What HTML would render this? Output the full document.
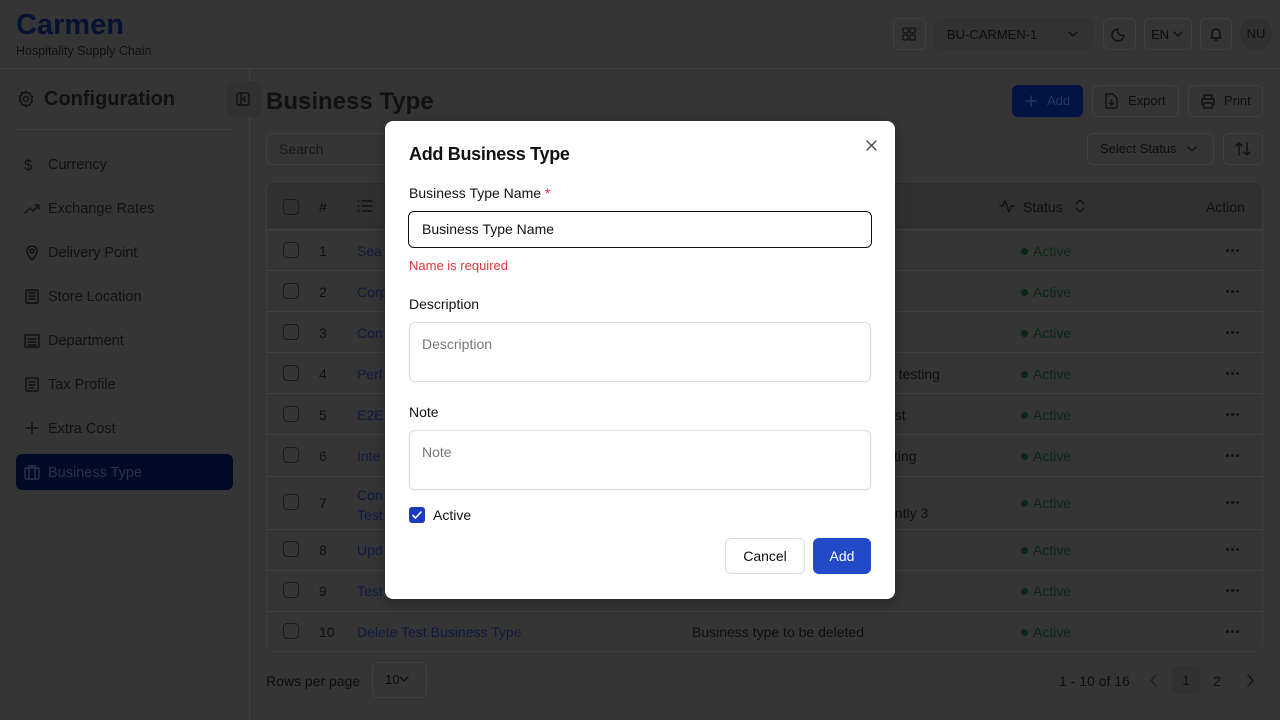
<!DOCTYPE html>
<html><head><meta charset="utf-8"><style>
*{box-sizing:border-box;margin:0;padding:0}
body{width:1280px;height:720px;overflow:hidden;background:#353535;font-family:"Liberation Sans",sans-serif;color:#0e0e0e;position:relative;font-size:14px}
.a{position:absolute}
.bx{position:absolute;border:1px solid #404040;border-radius:6px}
.cb{position:absolute;width:16px;height:16px;border:1px solid #1a1a1a;border-radius:4px;left:283px}
.row{position:absolute;left:266px;width:997px;border-top:1px solid #404040}
.lnk{color:#101a40}
.st{position:absolute;left:1021px;color:#0a2616}
.st:before{content:"";display:inline-block;width:7px;height:7px;border-radius:50%;background:#0a2616;margin-right:5px;vertical-align:1px}
.dots{position:absolute;left:1226px;width:14px;height:4px}
.dots:before{content:"";position:absolute;left:0;top:0;width:3px;height:3px;border-radius:50%;background:#111;box-shadow:5px 0 #111,10px 0 #111}
.nav{position:absolute;left:48px;font-size:14.5px;color:#111}
.ni{position:absolute;left:24px;width:16px;height:16px}
svg{fill:none;stroke:#111;stroke-width:2;stroke-linecap:round;stroke-linejoin:round}
</style></head><body>
<div class="a" style="left:16px;top:9px;font-size:29px;font-weight:bold;color:#061233">Carmen</div>
<div class="a" style="left:16px;top:44px;font-size:12.5px;color:#111">Hospitality Supply Chain</div>
<div class="a" style="left:0;top:68px;width:1280px;border-top:1px solid #404040"></div>
<div class="a" style="left:249px;top:69px;height:651px;border-left:1px solid #404040"></div>
<div class="bx" style="left:893px;top:18px;width:33px;height:32px"></div>
<svg class="a" style="left:902px;top:27px;stroke-width:1.3" width="14" height="14"><rect x="1" y="1" width="5" height="5" rx="1"/><rect x="8" y="1" width="5" height="5" rx="1"/><rect x="1" y="8" width="5" height="5" rx="1"/><rect x="8" y="8" width="5" height="5" rx="1"/></svg>
<div class="a" style="left:934px;top:18px;width:159px;height:32px;background:#323232;border-radius:6px"></div>
<div class="a" style="left:947px;top:27px;font-size:13px">BU-CARMEN-1</div>
<svg class="a" style="left:1067px;top:29px;stroke-width:1.4" width="12" height="10"><path d="M2 3l4 4 4-4"/></svg>
<div class="bx" style="left:1103px;top:18px;width:33px;height:32px"></div>
<svg class="a" style="left:1111px;top:26px;stroke-width:1.5" width="16" height="16"><path d="M13 9A6 6 0 1 1 7 3a4.5 4.5 0 0 0 6 6z"/></svg>
<div class="bx" style="left:1144px;top:18px;width:48px;height:32px"></div>
<div class="a" style="left:1151px;top:27px;font-size:13px">EN</div>
<svg class="a" style="left:1172px;top:29px;stroke-width:1.4" width="12" height="10"><path d="M2 3l4 4 4-4"/></svg>
<div class="bx" style="left:1200px;top:18px;width:32px;height:32px"></div>
<svg class="a" style="left:1208px;top:26px;stroke-width:1.5" width="16" height="16"><path d="M4 11V7a4 4 0 0 1 8 0v4l1 1H3zM7 14h2"/></svg>
<div class="a" style="left:1240px;top:18px;width:32px;height:32px;border-radius:50%;background:#303030;font-size:13px;text-align:center;line-height:32px">NU</div>

<svg class="a" style="left:17px;top:90px;stroke-width:1.6" width="18" height="18"><circle cx="9" cy="9" r="2.5"/><path d="M9 1.5l1.5 2 2.5-.5.5 2.5 2 1.5-1 2.3 1 2.2-2 1.5-.5 2.5-2.5-.5L9 16.5l-1.5-2-2.5.5-.5-2.5-2-1.5 1-2.2-1-2.3 2-1.5.5-2.5 2.5.5z"/></svg>
<div class="a" style="left:44px;top:88px;font-size:20px;font-weight:bold;color:#111">Configuration</div>
<div class="a" style="left:16px;top:129px;width:217px;border-top:1px solid #404040"></div>
<div class="a" style="left:227px;top:81px;width:34px;height:36px;background:#313131;border-radius:6px"></div>
<svg class="a" style="left:236px;top:92px;stroke-width:1.4" width="14" height="14"><rect x="1" y="1" width="12" height="12" rx="2"/><path d="M5 1v12M9 5l-2 2 2 2"/></svg>
<div class="ni" style="top:157px;font-size:15px">$</div><div class="nav" style="top:157px">Currency</div>
<svg class="a" style="left:24px;top:202px;stroke-width:1.5" width="16" height="14"><path d="M1 11l5-5 3 3 6-6M11 3h4v4"/></svg><div class="nav" style="top:201px">Exchange Rates</div>
<svg class="a" style="left:25px;top:244px;stroke-width:1.5" width="14" height="17"><path d="M7 16s5-5 5-9a5 5 0 0 0-10 0c0 4 5 9 5 9z"/><circle cx="7" cy="7" r="2"/></svg><div class="nav" style="top:245px">Delivery Point</div>
<svg class="a" style="left:25px;top:289px;stroke-width:1.5" width="14" height="15"><rect x="1" y="1" width="12" height="13" rx="1"/><path d="M4 4h6M4 7h6M4 10h6"/></svg><div class="nav" style="top:289px">Store Location</div>
<svg class="a" style="left:24px;top:333px;stroke-width:1.5" width="16" height="15"><rect x="1" y="2" width="14" height="12" rx="1"/><path d="M4 6h8M4 9h8M4 12h8"/></svg><div class="nav" style="top:333px">Department</div>
<svg class="a" style="left:25px;top:377px;stroke-width:1.5" width="14" height="15"><rect x="1" y="1" width="12" height="13" rx="1"/><path d="M4 5h6M4 8h6M4 11h4"/></svg><div class="nav" style="top:377px">Tax Profile</div>
<svg class="a" style="left:25px;top:421px;stroke-width:1.5" width="14" height="14"><path d="M7 1v12M1 7h12"/></svg><div class="nav" style="top:421px">Extra Cost</div>
<div class="a" style="left:16px;top:454px;width:217px;height:36px;background:#010b26;border-radius:6px"></div>
<svg class="a" style="left:24px;top:464px;stroke:#2b3146;stroke-width:1.5" width="16" height="16"><rect x="1" y="4" width="14" height="11" rx="1"/><path d="M5 4V2h6v2M5 4v11M11 4v11"/></svg><div class="nav" style="top:465px;color:#2b3146">Business Type</div>

<div class="a" style="left:266px;top:88px;font-size:24px;font-weight:bold;color:#111">Business Type</div>
<div class="a" style="left:1012px;top:85px;width:71px;height:32px;background:#021443;border-radius:6px;color:#2a355a;font-size:13px;line-height:32px;padding-left:35px">Add</div>
<svg class="a" style="left:1025px;top:95px;stroke:#2a355a;stroke-width:1.5" width="12" height="12"><path d="M6 1v10M1 6h10"/></svg>
<div class="bx" style="left:1092px;top:85px;width:87px;height:32px;font-size:13px;line-height:30px;padding-left:35px">Export</div>
<svg class="a" style="left:1105px;top:93px;stroke-width:1.4" width="13" height="16"><path d="M1 1h7l4 4v10H1zM6.5 7v5M4.5 10l2 2 2-2"/></svg>
<div class="bx" style="left:1188px;top:85px;width:75px;height:32px;font-size:13px;line-height:30px;padding-left:35px">Print</div>
<svg class="a" style="left:1200px;top:94px;stroke-width:1.4" width="16" height="15"><path d="M4 5V1h8v4M4 11H2V5h12v6h-2M4 9h8v5H4z"/></svg>
<div class="bx" style="left:266px;top:133px;width:200px;height:32px;font-size:14px;line-height:31px;padding-left:12px;color:#151515">Search</div>
<div class="bx" style="left:1087px;top:133px;width:127px;height:32px;font-size:13px;line-height:30px;padding-left:12px">Select Status</div>
<svg class="a" style="left:1186px;top:144px;stroke-width:1.4" width="12" height="10"><path d="M2 3l4 4 4-4"/></svg>
<div class="bx" style="left:1223px;top:133px;width:40px;height:32px"></div>
<svg class="a" style="left:1235px;top:141px;stroke-width:1.4" width="16" height="16"><path d="M4 14V2M1 5l3-3 3 3M12 2v12M9 11l3 3 3-3"/></svg>

<div class="a" style="left:266px;top:181px;width:997px;height:471px;border:1px solid #3d3d3d;border-radius:8px"></div>
<div class="a" style="left:267px;top:182px;width:995px;height:47px;background:#303030;border-radius:8px 8px 0 0"></div>
<div class="cb" style="top:199px"></div>
<div class="a" style="left:319px;top:199px">#</div>
<svg class="a" style="left:357px;top:199px;stroke-width:1.4" width="16" height="14"><path d="M5 2h10M5 7h10M5 12h10M1 2h1M1 7h1M1 12h1"/></svg>
<svg class="a" style="left:999px;top:198px;stroke-width:1.4" width="16" height="16"><path d="M1 8h3l2-6 4 12 2-6h3"/></svg>
<div class="a" style="left:1023px;top:199px">Status</div>
<svg class="a" style="left:1074px;top:199px;stroke-width:1.4" width="12" height="14"><path d="M2 5l4-4 4 4M2 9l4 4 4-4"/></svg>
<div class="a" style="left:1206px;top:199px">Action</div>

<div class="row" style="top:229px"></div><div class="cb" style="top:242px"></div><div class="a" style="left:319px;top:243px">1</div><div class="a lnk" style="left:357px;top:243px">Sea</div><div class="st" style="top:243px">Active</div><div class="dots" style="top:249px"></div>
<div class="row" style="top:270px"></div><div class="cb" style="top:283px"></div><div class="a" style="left:319px;top:284px">2</div><div class="a lnk" style="left:357px;top:284px">Corp</div><div class="st" style="top:284px">Active</div><div class="dots" style="top:290px"></div>
<div class="row" style="top:311px"></div><div class="cb" style="top:324px"></div><div class="a" style="left:319px;top:325px">3</div><div class="a lnk" style="left:357px;top:325px">Con</div><div class="st" style="top:325px">Active</div><div class="dots" style="top:331px"></div>
<div class="row" style="top:352px"></div><div class="cb" style="top:365px"></div><div class="a" style="left:319px;top:366px">4</div><div class="a lnk" style="left:357px;top:366px">Perf</div><div class="a" style="left:887px;top:366px">e testing</div><div class="st" style="top:366px">Active</div><div class="dots" style="top:372px"></div>
<div class="row" style="top:393px"></div><div class="cb" style="top:406px"></div><div class="a" style="left:319px;top:407px">5</div><div class="a lnk" style="left:357px;top:407px">E2E</div><div class="a" style="left:887px;top:407px">est</div><div class="st" style="top:407px">Active</div><div class="dots" style="top:413px"></div>
<div class="row" style="top:434px"></div><div class="cb" style="top:447px"></div><div class="a" style="left:319px;top:448px">6</div><div class="a lnk" style="left:357px;top:448px">Inte</div><div class="a" style="left:887px;top:448px">sting</div><div class="st" style="top:448px">Active</div><div class="dots" style="top:454px"></div>
<div class="row" style="top:476px"></div><div class="cb" style="top:494px"></div><div class="a" style="left:319px;top:495px">7</div><div class="a lnk" style="left:357px;top:485px;line-height:20px">Con<br>Test</div><div class="a" style="left:887px;top:505px">ently 3</div><div class="st" style="top:495px">Active</div><div class="dots" style="top:501px"></div>
<div class="row" style="top:529px"></div><div class="cb" style="top:541px"></div><div class="a" style="left:319px;top:542px">8</div><div class="a lnk" style="left:357px;top:542px">Upd</div><div class="st" style="top:542px">Active</div><div class="dots" style="top:548px"></div>
<div class="row" style="top:570px"></div><div class="cb" style="top:582px"></div><div class="a" style="left:319px;top:583px">9</div><div class="a lnk" style="left:357px;top:583px">Test</div><div class="st" style="top:583px">Active</div><div class="dots" style="top:589px"></div>
<div class="row" style="top:611px"></div><div class="cb" style="top:623px"></div><div class="a" style="left:319px;top:624px">10</div><div class="a lnk" style="left:357px;top:624px">Delete Test Business Type</div><div class="a" style="left:692px;top:624px">Business type to be deleted</div><div class="st" style="top:624px">Active</div><div class="dots" style="top:630px"></div>

<div class="a" style="left:266px;top:673px">Rows per page</div>
<div class="bx" style="left:372px;top:662px;width:55px;height:36px;font-size:13px;line-height:34px;padding-left:12px">10</div>
<svg class="a" style="left:399px;top:675px;stroke-width:1.3" width="10" height="9"><path d="M1 2l4 4 4-4"/></svg>
<div class="a" style="left:1059px;top:673px">1 - 10 of 16</div>
<svg class="a" style="left:1149px;top:674px;stroke:#222;stroke-width:1.5" width="10" height="13"><path d="M7 1L2 6.5 7 12"/></svg>
<div class="a" style="left:1172px;top:666px;width:28px;height:28px;background:#313131;border-radius:6px;text-align:center;line-height:28px">1</div>
<div class="a" style="left:1213px;top:673px">2</div>
<svg class="a" style="left:1245px;top:674px;stroke-width:1.5" width="10" height="13"><path d="M3 1l5 5.5L3 12"/></svg>

<div class="a" style="left:385px;top:121px;width:510px;height:478px;background:#fff;border-radius:8px;box-shadow:0 4px 16px rgba(0,0,0,.25)"></div>
<div class="a" style="left:409px;top:144px;font-size:18px;font-weight:bold;color:#111;letter-spacing:-.3px">Add Business Type</div>
<svg class="a" style="left:866px;top:140px;stroke-width:1.3;stroke:#444" width="11" height="11"><path d="M1 1l9 9M10 1L1 10"/></svg>
<div class="a" style="left:409px;top:185px;color:#111">Business Type Name <span style="color:#e23">*</span></div>
<div class="a" style="left:408px;top:211px;width:464px;height:37px;border:1.5px solid #111;border-radius:6px;padding-left:13px;line-height:35px;color:#111">Business Type Name</div>
<div class="a" style="left:409px;top:258px;font-size:13px;color:#e0343a">Name is required</div>
<div class="a" style="left:409px;top:296px;color:#111">Description</div>
<div class="a" style="left:409px;top:322px;width:462px;height:60px;border:1px solid #ddd;border-radius:6px;padding:13px 12px;color:#777;box-shadow:0 1px 2px rgba(0,0,0,.06)">Description</div>
<div class="a" style="left:409px;top:404px;color:#111">Note</div>
<div class="a" style="left:409px;top:430px;width:462px;height:60px;border:1px solid #ddd;border-radius:6px;padding:13px 12px;color:#777;box-shadow:0 1px 2px rgba(0,0,0,.06)">Note</div>
<div class="a" style="left:409px;top:507px;width:16px;height:16px;background:#1c3bbf;border-radius:3px"></div>
<svg class="a" style="left:411px;top:509px;stroke:#fff;stroke-width:1.6" width="12" height="12"><path d="M2 6.5l2.5 2.5L10 3"/></svg>
<div class="a" style="left:433px;top:507px;color:#111">Active</div>
<div class="a" style="left:725px;top:538px;width:80px;height:36px;border:1px solid #ddd;border-radius:6px;text-align:center;line-height:35px;color:#111">Cancel</div>
<div class="a" style="left:813px;top:538px;width:58px;height:36px;background:#2149c8;border-radius:6px;text-align:center;line-height:36px;color:#fff">Add</div>
</body></html>
